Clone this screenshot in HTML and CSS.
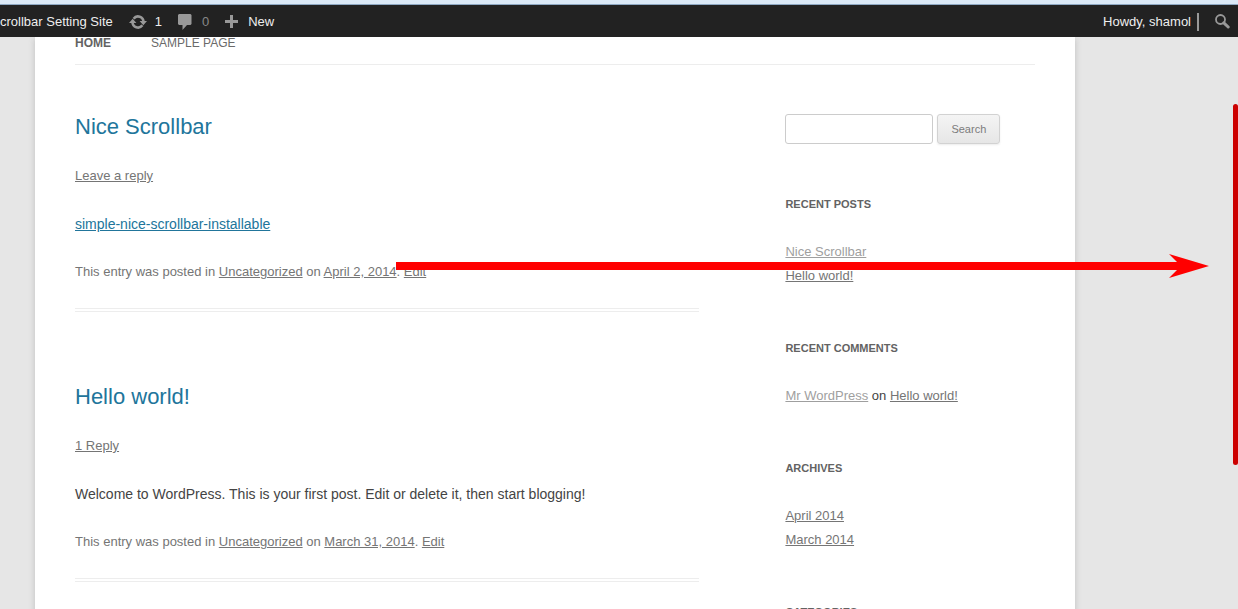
FILE: index.html
```
<!DOCTYPE html>
<html lang="en">
<head>
<meta charset="utf-8">
<title>Nice Scrollbar Setting Site</title>
<link rel="stylesheet" href="styles.css">
</head>
<body>
<header class="adminbar">
  <div class="adminbar-group">
    <a class="adminbar-item site-name" href="#">crollbar Setting Site</a>
    <a class="adminbar-item updates" href="#">
      <svg class="icon" width="18" height="16" viewBox="0 0 18 16" aria-hidden="true"><path d="M4.600 4.700A5.500 5.500 0 0 1 14.500 8M13.400 11.300A5.500 5.500 0 0 1 3.500 8" fill="none" stroke="currentColor" stroke-width="2.600"/><path d="M0 9 3.700 4.800 7.400 9zM10.600 7H18l-3.700 4.200z" fill="currentColor"/></svg>
      <span>1</span>
    </a>
    <a class="adminbar-item comments" href="#">
      <svg class="icon" width="14" height="16" viewBox="0 0 14 16" aria-hidden="true"><path d="M1 0h11.500L13.500 1v9L12.500 11H9l-4.500 5v-5H1L0 10V1z" fill="currentColor"/></svg>
      <span class="muted">0</span>
    </a>
    <a class="adminbar-item new" href="#">
      <svg class="icon" width="13" height="13" viewBox="0 0 13 13" aria-hidden="true"><path d="M5 0h3v5h5v3H8v5H5V8H0V5h5z" fill="currentColor"/></svg>
      <span>New</span>
    </a>
  </div>
  <div class="adminbar-group">
    <a class="adminbar-item account" href="#"><span>Howdy, shamol</span><span class="avatar"></span></a>
    <a class="adminbar-item" href="#" aria-label="Search">
      <svg class="icon" width="15" height="15" viewBox="0 0 15 15" aria-hidden="true"><circle cx="5.500" cy="5.500" r="4.500" fill="none" stroke="currentColor" stroke-width="1.800"/><path d="M8.800 8.800 13.200 13" stroke="currentColor" stroke-width="3" stroke-linecap="round"/></svg>
    </a>
  </div>
</header>

<div class="page">
  <nav class="menu">
    <a class="current" href="#">HOME</a>
    <a href="#">SAMPLE PAGE</a>
  </nav>
  <div class="columns">
    <main class="content">
      <article class="post">
        <h1><a href="#">Nice Scrollbar</a></h1>
        <p class="meta"><a href="#">Leave a reply</a></p>
        <p class="entry"><a href="#">simple-nice-scrollbar-installable</a></p>
        <p class="meta">This entry was posted in <a href="#">Uncategorized</a> on <a href="#">April 2, 2014</a>. <a href="#">Edit</a></p>
      </article>
      <article class="post">
        <h1><a href="#">Hello world!</a></h1>
        <p class="meta"><a href="#">1 Reply</a></p>
        <p class="entry">Welcome to WordPress. This is your first post. Edit or delete it, then start blogging!</p>
        <p class="meta">This entry was posted in <a href="#">Uncategorized</a> on <a href="#">March 31, 2014</a>. <a href="#">Edit</a></p>
      </article>
    </main>
    <aside class="sidebar">
      <form class="search">
        <input class="search-field" type="text" aria-label="Search for">
        <button class="search-button" type="button">Search</button>
      </form>
      <section>
        <h3>RECENT POSTS</h3>
        <ul>
          <li><a class="visited" href="#">Nice Scrollbar</a></li>
          <li><a href="#">Hello world!</a></li>
        </ul>
      </section>
      <section>
        <h3>RECENT COMMENTS</h3>
        <ul>
          <li><a class="visited" href="#">Mr WordPress</a> on <a href="#">Hello world!</a></li>
        </ul>
      </section>
      <section>
        <h3>ARCHIVES</h3>
        <ul>
          <li><a href="#">April 2014</a></li>
          <li><a href="#">March 2014</a></li>
        </ul>
      </section>
      <section>
        <h3>CATEGORIES</h3>
      </section>
    </aside>
  </div>
</div>

<div class="arrow">
  <div class="arrow-line"></div>
  <svg width="40" height="24" viewBox="0 0 40 24" aria-hidden="true"><path d="M0 0 40 12 0 24 8 16V8z" fill="currentColor"/></svg>
</div>
<div class="scroll-thumb"></div>
</body>
</html>
```
FILE: styles.css
```
* {
  box-sizing: border-box;
}

html {
  height: 100%;
  overflow: hidden;
}

body {
  position: relative;
  height: 100%;
  margin: 0;
  overflow: hidden;
  display: flex;
  flex-direction: column;
  background: #e6e6e6;
  color: #444;
  font-family: "Liberation Sans", Arial, sans-serif;
  font-size: 13px;
  line-height: 24px;
}

h1, h3, p, ul {
  margin: 0;
  padding: 0;
  list-style: none;
}

.adminbar {
  flex: none;
  display: flex;
  justify-content: space-between;
  height: 37px;
  padding: 2px 8px 0 0;
  border-top: 4px solid #dbe9f7;
  background: #222;
  box-shadow: inset 0 1px #8fa9c4;
  position: relative;
}

.adminbar-group {
  display: flex;
  gap: 16px;
}

.adminbar-item {
  display: flex;
  align-items: center;
  gap: 8px;
  color: #eee;
  text-decoration: none;
}

.comments,
.new {
  gap: 10px;
}

.icon {
  flex: none;
  color: #999;
}

.muted {
  color: #888;
}

.account {
  gap: 6px;
}

.avatar {
  width: 2px;
  height: 18px;
  background: #999;
}

.page {
  flex: 1 0 auto;
  width: calc(100% - 70px);
  max-width: 1040px;
  margin-left: 35px;
  padding: 0 40px;
  background: #fff;
  box-shadow: 0 2px 6px rgba(100, 100, 100, 0.3);
}

.menu {
  display: flex;
  gap: 40px;
  padding-bottom: 15px;
  border-bottom: 1px solid #ededed;
  font-size: 12px;
  line-height: 12px;
}

.menu a {
  color: #6a6a6a;
  text-decoration: none;
}

.menu .current {
  color: #636363;
  font-weight: bold;
}

.columns {
  display: flex;
  justify-content: space-between;
  padding-top: 49px;
}

.content {
  width: 65%;
}

.post {
  display: grid;
  gap: 24px;
  margin-bottom: 72px;
  padding-bottom: 24px;
  border-bottom: 4px double #ededed;
}

.post h1 {
  font-size: 22px;
  font-weight: normal;
  line-height: 26px;
}

.post h1 a {
  color: #21759b;
  text-decoration: none;
}

.meta,
.meta a,
.sidebar a {
  color: #757575;
}

.entry {
  font-size: 14px;
}

.entry a {
  color: #21759b;
}

.sidebar {
  width: 26%;
  display: flex;
  flex-direction: column;
  gap: 48px;
}

.sidebar h3 {
  margin-bottom: 24px;
  color: #636363;
  font-size: 11px;
  line-height: 24px;
}

.sidebar .visited {
  color: #9f9f9f;
}

.search {
  display: flex;
  align-items: center;
  gap: 4px;
}

.search-field {
  width: 148px;
  height: 30px;
  padding: 6px;
  border: 1px solid #ccc;
  border-radius: 3px;
}

.search-button {
  height: 30px;
  padding: 0 13px;
  border: 1px solid #d2d2d2;
  border-radius: 3px;
  background: linear-gradient(#f4f4f4, #e6e6e6);
  box-shadow: 0 1px 2px rgba(64, 64, 64, 0.1);
  color: #7c7c7c;
  font: 11px "Liberation Sans", Arial, sans-serif;
}

.arrow {
  position: absolute;
  top: 254px;
  left: 396px;
  right: 29px;
  display: flex;
  align-items: center;
  color: #f00;
}

.arrow-line {
  flex: 1;
  height: 8px;
  margin-right: -8px;
  background: currentColor;
}

.scroll-thumb {
  position: absolute;
  top: 104px;
  right: 0;
  width: 5px;
  height: 361px;
  border-radius: 3px;
  background: #c00;
}
```
